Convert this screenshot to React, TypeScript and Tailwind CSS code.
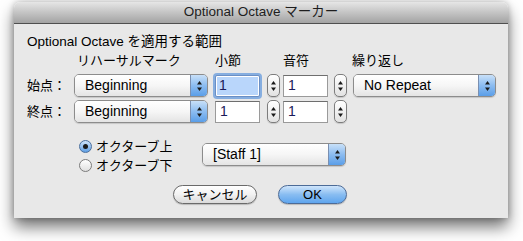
import React from "react";

const font = "font-['Liberation_Sans','Noto_Sans_CJK_JP',sans-serif]";

function Arrows({ color = "#1a1a1a" }: { color?: string }) {
  return (
    <svg width="7" height="12" viewBox="0 0 7 12">
      <path d="M3.5 1 L6 4.5 L1 4.5 Z" fill={color} />
      <path d="M3.5 11 L6 7.5 L1 7.5 Z" fill={color} />
    </svg>
  );
}

function PopUp({ label, width }: { label: string; width: string }) {
  return (
    <div
      className={`${width} h-[23px] flex rounded-[5px] border border-[#8c8c8c] overflow-hidden shadow-[0_1px_1px_rgba(0,0,0,0.15)]`}
    >
      <div className="flex-1 flex items-center pl-[10px] text-[14px] text-black bg-gradient-to-b from-[#ffffff] via-[#f6f6f6] to-[#e4e4e4]">
        {label}
      </div>
      <div className="w-[17px] flex items-center justify-center border-l border-[#7a8fb0] bg-gradient-to-b from-[#c8e0f8] via-[#8cbcf0] to-[#5a9ee8]">
        <Arrows />
      </div>
    </div>
  );
}

function Stepper() {
  return (
    <div className="w-[13px] h-[23px] rounded-[5px] border border-[#7d7d7d] bg-gradient-to-b from-[#ffffff] to-[#e2e2e2] flex items-center justify-center shadow-[0_1px_1px_rgba(0,0,0,0.15)]">
      <Arrows />
    </div>
  );
}

function Field({ focused }: { focused?: boolean }) {
  if (focused) {
    return (
      <div className="w-[45px] h-[22px] rounded-[2px] shadow-[0_0_0_2px_#86aee0] border border-[#6b8fc4] bg-white p-[1px]">
        <div className="h-full bg-[#b9d6fb] pl-[2px] text-[14px] leading-[17px] text-[#1a1a5a]">1</div>
      </div>
    );
  }
  return (
    <div className="w-[45px] h-[22px] border border-[#9a9a9a] border-t-[#6e6e6e] bg-white pl-[4px] text-[14px] leading-[18px] text-[#1a1a5a]">
      1
    </div>
  );
}

function Radio({ checked }: { checked?: boolean }) {
  if (checked) {
    return (
      <div className="w-[13px] h-[13px] rounded-full border border-[#4a6f9e] bg-gradient-to-b from-[#cfe4fa] to-[#5f9fe4] flex items-center justify-center">
        <div className="w-[5px] h-[5px] rounded-full bg-[#1b1b1b]" />
      </div>
    );
  }
  return (
    <div className="w-[13px] h-[13px] rounded-full border border-[#7b7b7b] bg-gradient-to-b from-[#ffffff] to-[#e0e0e0]" />
  );
}

export default function App() {
  return (
    <div className={`w-[523px] h-[241px] bg-white pl-[14px] pt-[2px] ${font}`}>
      <div className="w-[494px] h-[216px] flex flex-col rounded-t-[6px] overflow-hidden shadow-[0_9px_16px_rgba(0,0,0,0.55),0_0_6px_rgba(0,0,0,0.25)]">
        {/* Title bar */}
        <div className="h-[22px] shrink-0 flex items-center justify-center border-b border-[#4f4f4f] bg-gradient-to-b from-[#e6e6e6] to-[#a3a3a3] text-[13.5px] text-[#1e1e1e]">
          Optional Octave マーカー
        </div>

        {/* Body */}
        <div className="flex-1 bg-[#e8e8e8] pl-[13px] pt-[10px] text-[13px] text-black">
          <div className="h-[16px] leading-[16px] text-[13.5px]">Optional Octave を適用する範囲</div>

          <div className="mt-[4px] h-[14px] leading-[14px] flex">
            <div className="w-[50px]" />
            <div className="w-[138px]">リハーサルマーク</div>
            <div className="w-[68px]">小節</div>
            <div className="w-[69px]">音符</div>
            <div>繰り返し</div>
          </div>

          <div className="mt-[6px] h-[24px] flex items-start">
            <div className="w-[47px] h-[23px] leading-[23px]">始点：</div>
            <PopUp label="Beginning" width="w-[134px]" />
            <div className="ml-[7px] mt-[1px]">
              <Field focused />
            </div>
            <div className="ml-[7px]">
              <Stepper />
            </div>
            <div className="ml-[3px] mt-[1px]">
              <Field />
            </div>
            <div className="ml-[6px]">
              <Stepper />
            </div>
            <div className="ml-[6px]">
              <PopUp label="No Repeat" width="w-[143px]" />
            </div>
          </div>

          <div className="mt-[2px] h-[24px] flex items-start">
            <div className="w-[47px] h-[23px] leading-[23px]">終点：</div>
            <PopUp label="Beginning" width="w-[134px]" />
            <div className="ml-[7px] mt-[1px]">
              <Field />
            </div>
            <div className="ml-[7px]">
              <Stepper />
            </div>
            <div className="ml-[3px] mt-[1px]">
              <Field />
            </div>
            <div className="ml-[6px]">
              <Stepper />
            </div>
          </div>

          <div className="mt-[13px] flex items-start">
            <div className="ml-[52px] w-[123px] flex flex-col">
              <div className="h-[19px] flex items-center gap-[4px]">
                <Radio checked />
                <span>オクターブ上</span>
              </div>
              <div className="h-[19px] flex items-center gap-[4px]">
                <Radio />
                <span>オクターブ下</span>
              </div>
            </div>
            <div className="mt-[6px]">
              <PopUp label="[Staff 1]" width="w-[144px]" />
            </div>
          </div>

          <div className="mt-[10px] flex">
            <button className="ml-[146px] w-[84px] h-[19px] rounded-full border border-[#6a6a6a] bg-gradient-to-b from-[#ffffff] via-[#f2f2f2] to-[#dadada] text-[13px] leading-[17px] text-black shadow-[0_1px_1px_rgba(0,0,0,0.2)]">
              キャンセル
            </button>
            <button className="ml-[21px] w-[69px] h-[19px] rounded-full border border-[#4c6b97] bg-gradient-to-b from-[#cfe5fb] via-[#89bdf1] to-[#5ea5ee] text-[13px] leading-[17px] text-black shadow-[0_1px_1px_rgba(0,0,0,0.2)]">
              OK
            </button>
          </div>
        </div>
      </div>
    </div>
  );
}
